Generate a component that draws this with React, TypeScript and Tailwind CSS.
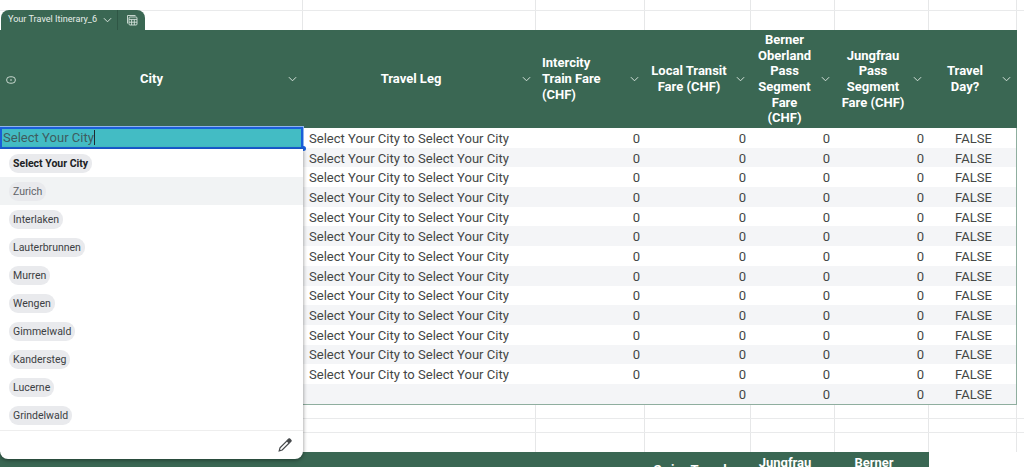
import React from "react";

const cols = "grid grid-cols-[303px_233px_109px_106px_84px_94px_88px_7px]";
const line = "border-r border-[#e6e7e8]";

function Chevron({ cls = "" }: { cls?: string }) {
  return (
    <svg viewBox="0 0 10 6" className={`w-[9px] h-[6px] shrink-0 ${cls}`} fill="none" stroke="#d8e4dd" strokeWidth="1.1">
      <path d="M1 1l4 4 4-4" />
    </svg>
  );
}

function Head({ children, cls = "" }: { children: React.ReactNode; cls?: string }) {
  return (
    <div className={`relative flex items-center justify-center text-center font-bold text-white text-[13px] leading-[15.7px] ${cls}`}>
      {children}
    </div>
  );
}

function GridRow({ h }: { h: string }) {
  return (
    <div className={`${cols} ${h} border-b border-[#e9eaeb]`}>
      {[0, 1, 2, 3, 4, 5, 6].map((i) => (
        <div key={i} className={line} />
      ))}
      <div />
    </div>
  );
}

const options = ["Select Your City", "Zurich", "Interlaken", "Lauterbrunnen", "Murren", "Wengen", "Gimmelwald", "Kandersteg", "Lucerne", "Grindelwald"];

export default function App() {
  const rows = Array.from({ length: 14 });
  return (
    <div className="relative w-[1024px] h-[467px] overflow-hidden bg-white font-['Roboto',sans-serif]">
      <GridRow h="h-[11px]" />
      <div className={`${cols} h-[19px]`}>
        {[0, 1, 2, 3, 4, 5, 6].map((i) => (
          <div key={i} className={line} />
        ))}
      </div>

      <div className="absolute left-[1px] top-[10px] w-[144px] h-[20px] flex items-center rounded-t-[8px] bg-[#3a6753] text-[#e6eee9]">
        <div className="flex items-center w-[117px] h-full pl-[7px] gap-[6px] border-r border-[#2f5645] text-[9.1px] whitespace-nowrap">
          <span>Your Travel Itinerary_6</span>
          <Chevron />
        </div>
        <div className="flex items-center justify-center h-full flex-1">
          <svg viewBox="0 0 12 12" className="w-[12px] h-[12px]" fill="none" stroke="#d5e2db" strokeWidth="0.9">
            <path d="M1.5 9.5V1.5h8" />
            <rect x="3" y="3" width="8" height="8" rx="1" />
            <path d="M3 5.4h8M5.6 5.4V11M8.3 5.4V11M3 8.2h8" />
          </svg>
        </div>
      </div>

      <div className="w-[1017px]">
        <div className="grid grid-cols-[303px_233px_109px_106px_84px_94px_88px] h-[98px] bg-[#3a6753]">
          <Head>
            <svg viewBox="0 0 10 8" className="absolute left-[6px] top-[46px] w-[10px] h-[8px]" fill="none" stroke="#d8e4dd" strokeWidth="0.9">
              <rect x="0.6" y="0.8" width="8.8" height="6.4" rx="3.2" />
              <circle cx="5" cy="4" r="0.8" fill="#d8e4dd" stroke="none" />
            </svg>
            City
            <Chevron cls="absolute right-[6px] top-[46px]" />
          </Head>
          <Head cls="pr-[17px]">
            Travel Leg
            <Chevron cls="absolute right-[5px] top-[46px]" />
          </Head>
          <Head cls="justify-start pl-[6px] text-left">
            <span>Intercity<br />Train Fare<br />(CHF)</span>
            <Chevron cls="absolute right-[6px] top-[46px]" />
          </Head>
          <Head cls="pr-[18px]">
            <span>Local Transit<br />Fare (CHF)</span>
            <Chevron cls="absolute right-[6px] top-[46px]" />
          </Head>
          <Head cls="pr-[17px]">
            <span>Berner<br />Oberland<br />Pass<br />Segment<br />Fare<br />(CHF)</span>
            <Chevron cls="absolute right-[5px] top-[46px]" />
          </Head>
          <Head cls="pr-[18px]">
            <span>Jungfrau<br />Pass<br />Segment<br />Fare (CHF)</span>
            <Chevron cls="absolute right-[7px] top-[46px]" />
          </Head>
          <Head cls="pr-[16px]">
            <span>Travel<br />Day?</span>
            <Chevron cls="absolute right-[6px] top-[46px]" />
          </Head>
        </div>

        <div className="border-r border-b border-[#8fae9f]">
          {rows.map((_, i) => (
            <div
              key={i}
              className={`grid grid-cols-[303px_233px_109px_106px_84px_94px_87px] h-[19.7px] pt-[1px] items-center text-[13.05px] leading-[17px] text-[#444746] ${i % 2 ? "bg-[#f4f5f7]" : "bg-white"}`}
            >
              <div />
              <div className="pl-[6px] whitespace-nowrap">{i < 13 ? "Select Your City to Select Your City" : ""}</div>
              <div className="text-right pr-[5px]">{i < 13 ? "0" : ""}</div>
              <div className="text-right pr-[5px]">0</div>
              <div className="text-right pr-[5px]">0</div>
              <div className="text-right pr-[5px]">0</div>
              <div className="text-center pl-[2px]">FALSE</div>
            </div>
          ))}
        </div>
      </div>

      <GridRow h="h-[14px]" />
      <GridRow h="h-[14px]" />
      <div className={`${cols} h-[19px]`}>
        {[0, 1, 2, 3, 4, 5, 6].map((i) => (
          <div key={i} className={line} />
        ))}
      </div>

      <div className="grid grid-cols-[645px_106px_84px_94px] h-[40px] w-[929px] bg-[#3a6753] text-white font-bold text-[13px] leading-[15.7px] text-center">
        <div />
        <div className="pt-[10px] pr-[16px]">Swiss Travel</div>
        <div className="pt-[3px] pr-[16px]">Jungfrau<br />Pass</div>
        <div className="pt-[3px] pr-[16px]">Berner<br />Oberland</div>
      </div>

      <div className="absolute left-0 top-[127px] w-[303px] h-[22px] bg-[#43bcc4] border-2 border-[#1a5fd8] outline outline-1 outline-[#8fb4ef] text-[13.05px] leading-[18px] text-[#3f5c60] pl-[1px] whitespace-nowrap">
        Select Your City<span className="inline-block w-[1px] h-[15px] bg-[#1f2a30] align-[-3px]" />
      </div>
      <div className="absolute left-[301px] top-[146px] w-[5px] h-[5px] rounded-full bg-[#1a5fd8]" />

      <div className="absolute left-0 top-[149px] w-[303px] h-[310px] bg-white rounded-b-[8px] shadow-[0_1px_4px_rgba(0,0,0,0.45)] flex flex-col">
        <div className="flex-1 flex flex-col">
          {options.map((o, i) => (
            <div key={o} className={`h-[28px] flex items-center pl-[9px] ${i === 1 ? "bg-[#f1f3f4]" : ""}`}>
              <span className={`h-[19px] px-[4px] rounded-[9px] bg-[#e9eaed] text-[10.5px] leading-[19px] whitespace-nowrap ${i === 0 ? "font-bold text-[#202124]" : i === 1 ? "text-[#5f6368]" : "text-[#3c4043]"}`}>
                {o}
              </span>
            </div>
          ))}
        </div>
        <div className="h-[29px] shrink-0 border-t border-[#eeeeee] flex items-center justify-end pr-[11px]">
          <svg viewBox="0 0 14 14" className="w-[14px] h-[14px]" fill="none" stroke="#45484b" strokeWidth="1.2">
            <path d="M1.2 12.8l.8-3L9 2.8l2.2 2.2-7 7z" />
            <path d="M9.5 2.2l1.3-1.2c.3-.2.6-.2.9 0l1.3 1.3c.2.3.2.6 0 .9l-1.2 1.3z" fill="#45484b" />
          </svg>
        </div>
      </div>
    </div>
  );
}
